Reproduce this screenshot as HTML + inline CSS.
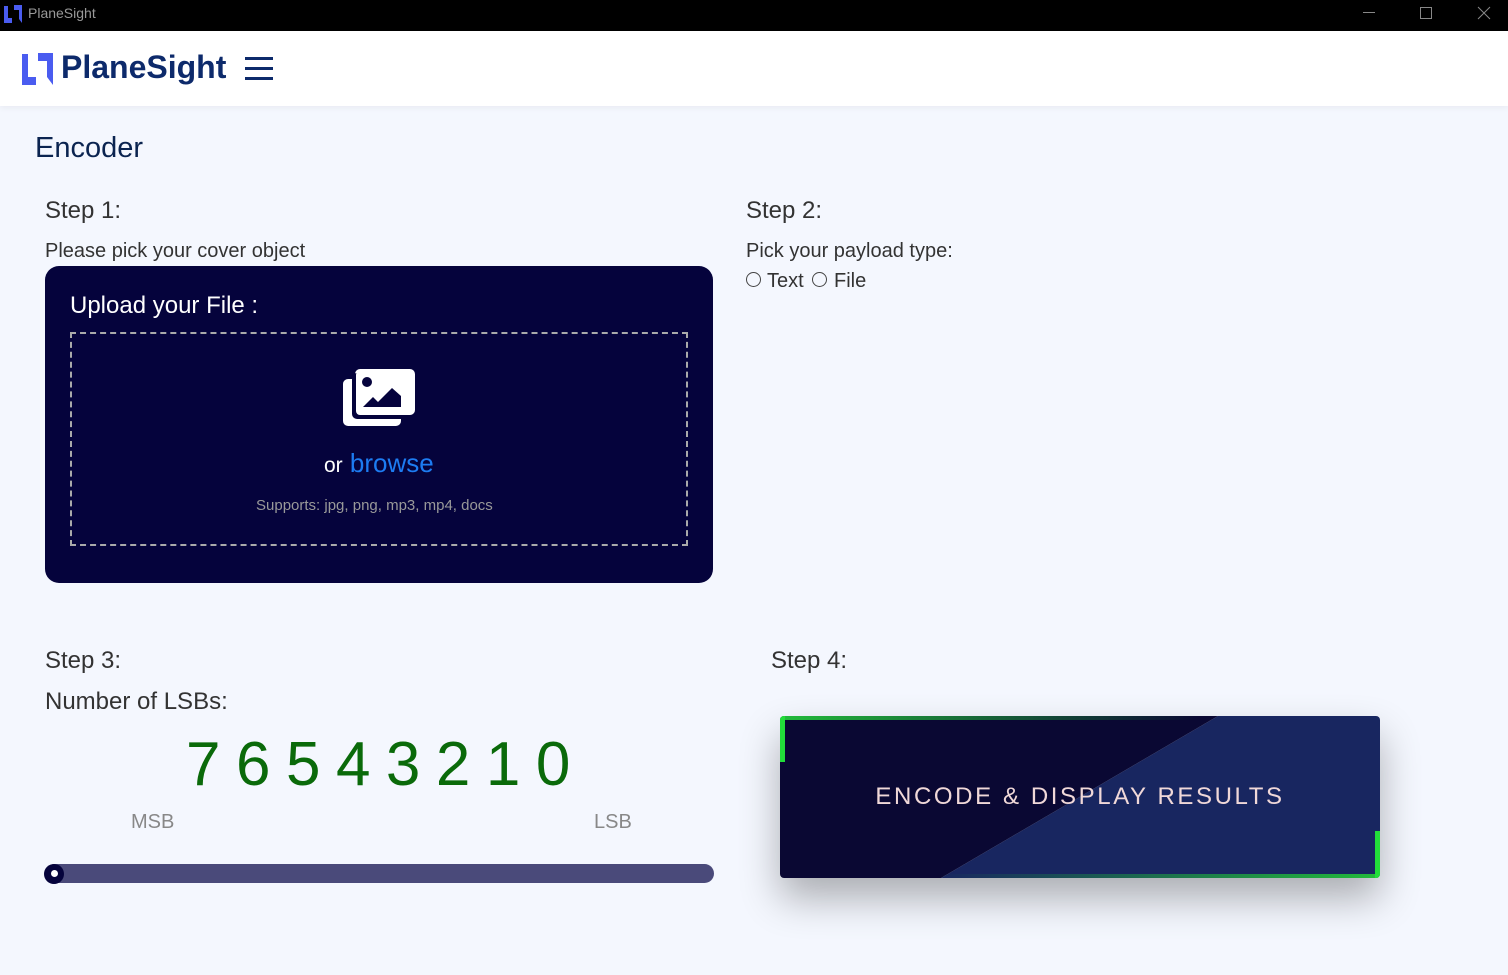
<!DOCTYPE html>
<html><head><meta charset="utf-8"><style>
*{margin:0;padding:0;box-sizing:border-box}
body{width:1508px;height:975px;background:#f4f7fe;font-family:"Liberation Sans",sans-serif;position:relative;overflow:hidden;color:#333}
.abs{position:absolute}
.tb{left:0;top:0;width:1508px;height:31px;background:#000}
.hdr{left:0;top:31px;width:1508px;height:75px;background:#fff;box-shadow:0 2px 6px rgba(0,0,0,.05)}
.t{position:absolute;white-space:nowrap}
</style></head><body>
<div class="abs tb">
<svg class="abs" style="left:3px;top:4px" width="20" height="20" viewBox="0 0 20 20"><path d="M1 2h4v12h4v5H1z M11 1l8 0v18l-3-4V6h-5z" fill="#4a5cf0"/></svg>
<div class="t" style="left:28px;top:5px;font-size:14px;color:#999">PlaneSight</div>
<div class="abs" style="left:1363px;top:12px;width:12px;height:1px;background:#888"></div>
<div class="abs" style="left:1420px;top:7px;width:12px;height:12px;border:1px solid #888"></div>
<svg class="abs" style="left:1477px;top:6px" width="14" height="14"><path d="M1 1L13 13M13 1L1 13" stroke="#888" stroke-width="1"/></svg>
</div>
<div class="abs hdr">
<svg class="abs" style="left:22px;top:22px" width="32" height="32" viewBox="0 0 32 32"><path d="M0 1h6v23h8v8H0z M16 0h15v32l-6-8V8h-9z" fill="#4a5cf0"/></svg>
<div class="t" style="left:61px;top:18px;font-size:32px;font-weight:bold;color:#0d2a6b">PlaneSight</div>
<div class="abs" style="left:245px;top:26px;width:28px;height:3px;background:#0d2a6b"></div>
<div class="abs" style="left:245px;top:36px;width:28px;height:3px;background:#0d2a6b"></div>
<div class="abs" style="left:245px;top:46px;width:28px;height:3px;background:#0d2a6b"></div>
</div>
<div class="t" style="left:35px;top:132px;font-size:29px;color:#0b2450">Encoder</div>
<div class="t" style="left:45px;top:197px;font-size:24px;color:#333">Step 1:</div>
<div class="t" style="left:45px;top:240px;font-size:20px;color:#333">Please pick your cover object</div>
<div class="abs" style="left:45px;top:266px;width:668px;height:317px;background:#05033c;border-radius:14px">
<div class="t" style="left:25px;top:26px;font-size:24px;color:#fff">Upload your File :</div>
<div class="abs" style="left:25px;top:66px;width:618px;height:214px;border:2px dashed #aaa"></div>
<svg class="abs" style="left:298px;top:103px" width="73" height="57" viewBox="0 0 73 57"><rect x="12" y="0" width="60" height="46" rx="5" fill="#fff"/><rect x="0" y="10" width="58" height="47" rx="5" fill="#fff"/><rect x="9" y="4" width="60" height="46" rx="5" fill="#05033c"/><rect x="13" y="2" width="58" height="44" rx="4" fill="#fff"/><circle cx="24" cy="13" r="5" fill="#05033c"/><path d="M20 38l10-10 5 5 14-14 9 8v11z" fill="#05033c"/></svg>
<div class="t" style="left:279px;top:182px;font-size:26px;color:#fff"><span style="font-size:21px">or</span> <span style="color:#1d7cf2">browse</span></div>
<div class="t" style="left:211px;top:231px;font-size:15px;color:#999">Supports: jpg, png, mp3, mp4, docs</div>
</div>
<div class="t" style="left:746px;top:197px;font-size:24px;color:#333">Step 2:</div>
<div class="t" style="left:746px;top:240px;font-size:20px;color:#333">Pick your payload type:</div>
<div class="abs" style="left:746px;top:272px;width:15px;height:15px;border:1px solid #444;border-radius:50%"></div>
<div class="t" style="left:767px;top:270px;font-size:20px;color:#333">Text</div>
<div class="abs" style="left:812px;top:272px;width:15px;height:15px;border:1px solid #444;border-radius:50%"></div>
<div class="t" style="left:834px;top:270px;font-size:20px;color:#333">File</div>
<div class="t" style="left:45px;top:647px;font-size:24px;color:#333">Step 3:</div>
<div class="t" style="left:45px;top:688px;font-size:24px;color:#333">Number of LSBs:</div>
<div class="t" style="left:186px;top:729px;font-size:62px;color:#0a6a0a;letter-spacing:15.5px">76543210</div>
<div class="t" style="left:131px;top:811px;font-size:20px;color:#888">MSB</div>
<div class="t" style="left:594px;top:811px;font-size:20px;color:#888">LSB</div>
<div class="abs" style="left:45px;top:864px;width:669px;height:19px;background:#4a4a7a;border-radius:10px"></div>
<div class="abs" style="left:44px;top:864px;width:20px;height:20px;background:#05033c;border-radius:50%"></div>
<div class="abs" style="left:51px;top:870px;width:7px;height:7px;background:#fff;border-radius:50%"></div>
<div class="t" style="left:771px;top:647px;font-size:24px;color:#333">Step 4:</div>
<div class="abs" style="left:780px;top:716px;width:600px;height:162px;border-radius:4px;overflow:hidden;box-shadow:0 20px 40px rgba(0,0,0,.3)">
<svg class="abs" style="left:0;top:0" width="600" height="162"><polygon points="161,162 438,0 600,0 600,162" fill="#182660"/><polygon points="0,0 438,0 161,162 0,162" fill="#0a0833"/></svg>
<div class="abs" style="left:0;top:0;width:420px;height:4px;background:linear-gradient(to right,#22bb3a,transparent)"></div>
<div class="abs" style="left:0;top:0;width:5px;height:46px;background:#22dd3a"></div>
<div class="abs" style="right:0;bottom:0;width:440px;height:4px;background:linear-gradient(to left,#22bb3a,transparent)"></div>
<div class="abs" style="right:0;bottom:0;width:5px;height:47px;background:#22dd3a"></div>
<div class="t" style="left:0;width:600px;text-align:center;top:67px;font-size:24px;letter-spacing:2.6px;color:#f0d8d8">ENCODE &amp; DISPLAY RESULTS</div>
</div>
</body></html>
